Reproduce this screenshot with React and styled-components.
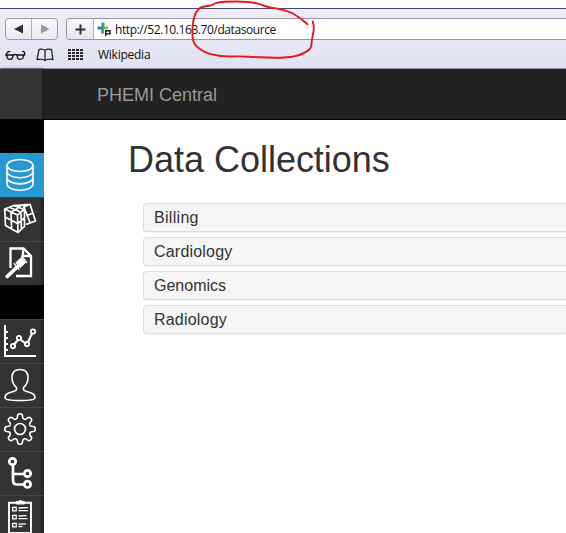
import React from 'react';
import styled, { createGlobalStyle } from 'styled-components';

const GlobalStyle = createGlobalStyle`
  *, *::before, *::after { box-sizing: border-box; }
  html, body { margin: 0; overflow: hidden; background: #fff; }
  body { font-family: "Liberation Sans", Arial, sans-serif; }
  svg { display: block; }
`;

const Page = styled.div`
  position: relative;
  width: 566px;
  height: 533px;
  overflow: hidden;
  display: flex;
  flex-direction: column;
  background: #fff;
`;

const Browser = styled.header`
  flex: none;
  height: 61px;
  margin-top: 8px;
  border-top: 1px solid #474a6a;
  border-bottom: 1px solid #8e90a0;
  background: linear-gradient(#e8effc 0, #f0ecf7 4px, #e9e9f4 30px, #e1e2f0 100%);
  color: #111;
  font-family: "Open Sans", "Noto Sans", sans-serif;
`;

const Toolbar = styled.div`
  display: flex;
  height: 31px;
  padding: 9px 0 0 5px;
  gap: 8px;
`;

const ButtonGroup = styled.div`
  display: flex;
  flex: none;
  width: 53px;
  height: 22px;
  border: 1px solid #9c9ca6;
  border-radius: 4px;
  background: linear-gradient(#fbfbfd, #e9e9ef);
`;

const ToolButton = styled.button`
  flex: 1;
  display: grid;
  place-items: center;
  padding: 0;
  border: 0;
  border-right: ${(p) => (p.$divided ? '1px solid #b0b0ba' : '0')};
  background: none;
`;

const AddressBar = styled.div`
  flex: 1;
  display: flex;
  height: 22px;
  border: 1px solid #96969f;
  border-right: 0;
  border-radius: 4px 0 0 4px;
  background: #fff;
  overflow: hidden;
`;

const AddButton = styled(ToolButton)`
  flex: none;
  width: 27px;
  background: linear-gradient(#fbfbfd, #e5e5ec);
`;

const Favicon = styled.div`
  width: 15px;
  margin: 3px 0 0 3px;
`;

const Url = styled.span`
  margin-left: 3px;
  font-size: 12px;
  line-height: 22px;
  letter-spacing: -0.42px;
  white-space: nowrap;
`;

const Bookmarks = styled.nav`
  display: flex;
  align-items: center;
  height: 30px;
  padding-left: 5px;
`;

const BookmarkIcon = styled.div`
  width: ${(p) => p.$width}px;
  flex: none;
`;

const Bookmark = styled.span`
  font-size: 12px;
  line-height: 20px;
  letter-spacing: -0.25px;
`;

const Navbar = styled.div`
  flex: none;
  display: flex;
  height: 51px;
  background: #222;
  border-bottom: 1px solid #080808;
`;

const NavCorner = styled.div`
  width: 42px;
  background: #333;
  box-shadow: 1px 0 2px #171717;
`;

const Brand = styled.span`
  margin-left: 55px;
  font-size: 18px;
  line-height: 52px;
  color: #999;
`;

const Body = styled.div`
  flex: 1;
  min-height: 0;
  display: flex;
`;

const Sidebar = styled.aside`
  flex: none;
  width: 44px;
  padding-top: 33px;
  background: #000;
  overflow: hidden;
`;

const MenuGroup = styled.div`
  margin-bottom: 34px;
`;

const MenuItem = styled.div`
  width: 44px;
  height: 44px;
  border-top: 1px solid ${(p) => (p.$active ? '#2c9bd3' : '#464646')};
  background: ${(p) =>
    p.$active ? '#2898d0' : 'linear-gradient(90deg, #333 0, #333 39px, #222 44px)'};

  svg {
    margin-top: -1px;
    fill: none;
    stroke: #fff;
    stroke-width: 1.6;
    stroke-linejoin: round;
    stroke-linecap: round;
  }
`;

const Content = styled.main`
  flex: 1;
  padding-left: 84px;
`;

const Title = styled.h1`
  margin: 20px 0 0;
  font-size: 36px;
  font-weight: 400;
  line-height: 40px;
  letter-spacing: -0.02px;
  color: #333;
  white-space: nowrap;
`;

const Collections = styled.div`
  display: grid;
  gap: 5px;
  margin: 23px 0 0 15px;
`;

const Collection = styled.div`
  height: 29px;
  padding-left: 10px;
  border: 1px solid #ddd;
  border-right: 0;
  border-radius: 4px 0 0 4px;
  background: #f5f5f5;
  box-shadow: 0 1px 1px rgba(0, 0, 0, 0.05);
  font-size: 16px;
  line-height: 28px;
  letter-spacing: ${(p) => p.$tracking}px;
  color: #333;
`;

const Annotation = styled.svg`
  position: absolute;
  left: 0;
  top: 0;
  pointer-events: none;
`;

const Icon = ({ children }) => (
  <svg width="44" height="44" viewBox="0 0 44 44">{children}</svg>
);

const DatabaseIcon = () => (
  <Icon>
    <ellipse cx="20" cy="12.500" rx="13" ry="6" />
    <path d="M7 12.500V31c0 3.400 5.800 6.200 13 6.200S33 34.400 33 31V12.500M7 18.500c0 3.400 5.800 6.200 13 6.200s13-2.800 13-6.200M7 24.700c0 3.400 5.800 6.200 13 6.200s13-2.800 13-6.200" />
  </Icon>
);

const CubeIcon = () => (
  <Icon>
    <g strokeWidth="1.700">
      <path d="M4.700 12 14 8.500l10 4-6.500 5.500ZM4.700 12 5.500 28.500 18 35.500l6.500-6V12.500M17.500 18l.5 17.500M5 20l12.700 6.500 6.800-5.500M11 15l.6 17M21 15.300l.4 17M9.300 10.300l11.500 4.700M19 10.500 11 15" />
      <path d="M14 8.500 23 7.800l7-.5L35.500 24l-9 3.200M23 7.800 30 25.500M30 7.300l-6.500 3M18 9.800l5-2M27 18.500l6-2.500" />
    </g>
  </Icon>
);

const GavelDocIcon = () => (
  <Icon>
    <path strokeWidth="2.300" strokeLinejoin="miter" strokeLinecap="butt" d="M10.500 27V7.500h13L31 15v20H16M23 7.500V15h8" />
    <path strokeWidth="3.800" d="m7.200 35.500 11-10.500" />
    <path fill="#fff" strokeWidth="1" d="m16 21.500 5.500-5 4 5-5 5Z" />
    <path strokeWidth="1.200" d="m14 22.500 5 6M21.500 15l5.300 6.500" />
  </Icon>
);

const ChartIcon = () => (
  <Icon>
    <path strokeWidth="2" strokeLinecap="butt" strokeLinejoin="miter" d="M5 6V37h31M5 13h3M5 19h3M5 25h3M5 31h3" />
    <path strokeWidth="2.200" d="m14 25.500 4-4.500M20.500 20.500l5 4M28 23l4-8.500" />
    <g strokeWidth="1.800">
      <circle cx="13" cy="27" r="2.200" />
      <circle cx="19" cy="19" r="2.200" />
      <circle cx="27" cy="25" r="2.200" />
      <circle cx="33" cy="12.500" r="2.200" />
    </g>
  </Icon>
);

const UserIcon = () => (
  <Icon>
    <path d="M16.500 24.500C13.500 22 12 18.500 12 14.500 12 9 15 6.500 20 6.500s8 2.500 8 8c0 4-1.500 7.500-4.500 10v2c0 1.500 3 2 6.500 3s5 3.500 5 5.200c0 1.800-6 2.800-15 2.800s-15-1-15-2.800 1.500-4.200 5-5.200 6.500-1.500 6.500-3Z" />
  </Icon>
);

const gearOutline = Array.from({ length: 192 }, (_, i) => {
  const angle = (i / 192) * Math.PI * 2;
  const radius = 13 + (2.200 * Math.tanh(1.900 * Math.cos(8 * angle))) / Math.tanh(1.900);
  return `${(20 + radius * Math.sin(angle)).toFixed(2)},${(22 - radius * Math.cos(angle)).toFixed(2)}`;
}).join(' ');

const GearIcon = () => (
  <Icon>
    <circle cx="20" cy="22" r="5.500" />
    <polygon points={gearOutline} />
  </Icon>
);

const TreeIcon = () => (
  <Icon>
    <g strokeWidth="2.700">
      <path d="M13 14v15c0 3 1 4.500 4 4.500h6M13 23h10" />
      <circle cx="12.500" cy="10.500" r="3.200" />
      <circle cx="27.500" cy="22.500" r="3.200" />
      <circle cx="27.500" cy="33.300" r="3.200" />
    </g>
  </Icon>
);

const ClipboardIcon = () => (
  <Icon>
    <path strokeWidth="1.900" strokeLinejoin="miter" d="M9 7.700h22V38H9Z" />
    <path fill="#fff" strokeWidth="1" d="M16.500 6.500h2c0-1.200 4-1.200 4 0h2V9h-8Z" />
    <path strokeWidth="1.300" strokeLinejoin="miter" d="M12.700 12.300h3.500v3.500h-3.500ZM12.700 20.300h3.500v3.500h-3.500ZM12.700 28.300h3.500v3.500h-3.500ZM19 13l8.500-.4M19 15.700h8.500M19 21l7-.3M19 23.700h8M19 29.200l6.500-.4M19 31.500h3" />
  </Icon>
);

const GlassesIcon = () => (
  <svg width="21" height="12" viewBox="0 0 21 12" fill="none" stroke="#151520" strokeWidth="1.300" strokeLinecap="round">
    <path d="M1 6.500C1.300 4 3 2.300 5 2.300M19.500 6c.5-2 .2-3.700-2-3.700M8 6.300q2-1.600 4 0M.8 6H8M12 6h7.800" />
    <path d="M2 6c-.3 3 .8 4.300 2.800 4.300S8 8.800 8 6M12 6c0 2.800 1.300 4.300 3.300 4.300S18.800 8.500 18.500 6" />
  </svg>
);

const BookIcon = () => (
  <svg width="19" height="14" viewBox="0 0 19 14" fill="none" stroke="#252530" strokeWidth="1.300" strokeLinejoin="round">
    <path d="M9 2.500C7.500 1 5 1 3 1.500L1 11.500c3-.6 6-.6 8 1 2-1.600 5-1.600 8-1l-1.500-10c-2.500-.5-5-.5-6.500 1ZM9 2.500v10" />
  </svg>
);

const GridIcon = () => (
  <svg width="16" height="12" viewBox="0 0 16 12" fill="#282832">
    {[0, 3, 6, 9].map((y) =>
      [0, 4, 8, 12].map((x) => <rect key={`${x}-${y}`} x={x} y={y} width="3" height="2" />)
    )}
  </svg>
);

const PhemiIcon = () => (
  <svg width="15" height="15" viewBox="0 0 15 15" fill="none">
    <path d="M6 .5v6" stroke="#259bc4" strokeWidth="3" />
    <path d="M.5 6H6" stroke="#2389ad" strokeWidth="3" />
    <path d="M6 6h5" stroke="#83b83b" strokeWidth="3" />
    <path d="M5.500 6.500v5" stroke="#3eb257" strokeWidth="3" />
    <path d="M8.700 14V8.700h4.300v3.200H8.700" stroke="#fff" strokeWidth="3" />
    <path d="M8.700 14V8.700h4.300v3.200H8.700" stroke="#151515" strokeWidth="1.400" />
  </svg>
);

const dataMenu = [
  { id: 'database', Glyph: DatabaseIcon, active: true },
  { id: 'cubes', Glyph: CubeIcon },
  { id: 'policies', Glyph: GavelDocIcon },
];

const adminMenu = [
  { id: 'chart', Glyph: ChartIcon },
  { id: 'user', Glyph: UserIcon },
  { id: 'settings', Glyph: GearIcon },
  { id: 'tree', Glyph: TreeIcon },
  { id: 'clipboard', Glyph: ClipboardIcon },
];

const collections = [
  { name: 'Billing', tracking: 0.300 },
  { name: 'Cardiology', tracking: 0.200 },
  { name: 'Genomics', tracking: 0 },
  { name: 'Radiology', tracking: 0.200 },
];

const Menu = ({ items }) => (
  <MenuGroup>
    {items.map(({ id, Glyph, active }) => (
      <MenuItem key={id} $active={active}>
        <Glyph />
      </MenuItem>
    ))}
  </MenuGroup>
);

export default function App() {
  return (
    <Page>
      <GlobalStyle />
      <Browser>
        <Toolbar>
          <ButtonGroup>
            <ToolButton $divided>
              <svg width="10" height="10"><path d="M9 .5v9L0 5Z" fill="#303038" /></svg>
            </ToolButton>
            <ToolButton>
              <svg width="10" height="10"><path d="M1 .5v9L9.500 5Z" fill="#96969e" /></svg>
            </ToolButton>
          </ButtonGroup>
          <AddressBar>
            <AddButton $divided>
              <svg width="11" height="11"><path d="M5.500.5v10M.5 5.500h10" stroke="#303038" strokeWidth="2" /></svg>
            </AddButton>
            <Favicon><PhemiIcon /></Favicon>
            <Url>http://52.10.163.70/datasource</Url>
          </AddressBar>
        </Toolbar>
        <Bookmarks>
          <BookmarkIcon $width={31}><GlassesIcon /></BookmarkIcon>
          <BookmarkIcon $width={32}><BookIcon /></BookmarkIcon>
          <BookmarkIcon $width={30}><GridIcon /></BookmarkIcon>
          <Bookmark>Wikipedia</Bookmark>
        </Bookmarks>
      </Browser>
      <Navbar>
        <NavCorner />
        <Brand>PHEMI Central</Brand>
      </Navbar>
      <Body>
        <Sidebar>
          <Menu items={dataMenu} />
          <Menu items={adminMenu} />
        </Sidebar>
        <Content>
          <Title>Data Collections</Title>
          <Collections>
            {collections.map(({ name, tracking }) => (
              <Collection key={name} $tracking={tracking}>{name}</Collection>
            ))}
          </Collections>
        </Content>
      </Body>
      <Annotation width="566" height="64" fill="none" stroke="#e8161d" strokeWidth="1.900" strokeLinecap="round" strokeLinejoin="round">
        <path d="M307.500 24.300C303 20 299 17 293 13.500 286 10.500 279 8.500 273 8 268 7.500 263 5 258 3.700 251 1.500 243 1.500 236.500 1.500 229 1.500 222 1.500 216.500 2.800 213 4 212 5.500 209 5.700 205 6.500 202 6.500 200 8 196 11 195 14 194 18 192 24 192.500 31 192.500 36 192.500 42 195 46 200 49 204 52 208 53.500 213 54.700 220 56.500 227 56.700 233 56.500 242 56 247 56.700 254 57 266 57.500 279 58.500 290 57 297 56 300 55 303 53.300 308 51 310 50 311 47 312 43 311.500 40 312.500 37 313.500 32 315 28 312.700 21.500" />
      </Annotation>
    </Page>
  );
}
